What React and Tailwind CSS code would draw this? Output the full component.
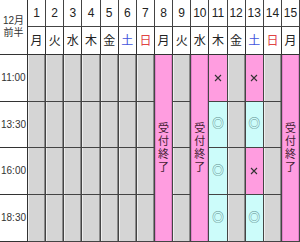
import React from "react";

const days = [
  { n: 1, d: "月", c: "text-[#222]" },
  { n: 2, d: "火", c: "text-[#222]" },
  { n: 3, d: "水", c: "text-[#222]" },
  { n: 4, d: "木", c: "text-[#222]" },
  { n: 5, d: "金", c: "text-[#222]" },
  { n: 6, d: "土", c: "text-[#4455dd]" },
  { n: 7, d: "日", c: "text-[#e04444]" },
  { n: 8, d: "月", c: "text-[#222]" },
  { n: 9, d: "火", c: "text-[#222]" },
  { n: 10, d: "水", c: "text-[#222]" },
  { n: 11, d: "木", c: "text-[#222]" },
  { n: 12, d: "金", c: "text-[#222]" },
  { n: 13, d: "土", c: "text-[#4455dd]" },
  { n: 14, d: "日", c: "text-[#e04444]" },
  { n: 15, d: "月", c: "text-[#222]" },
];

const body = {
  8: "closed",
  10: "closed",
  15: "closed",
  11: ["x", "o", "o", "o"],
  13: ["x", "o", "x", "o"],
};

const rowH = ["h-[48px]", "h-[47px]", "h-[48px]", "h-[48px]"];
const times = ["11:00", "13:30", "16:00", "18:30"];

function Slot({ v, h }) {
  if (v === "gray") {
    return <div className={`${h} bg-[#d5d5d5] border-b border-r border-[#444] shadow-[inset_1px_0_0_#eeeeee,inset_-1px_0_0_#8a8a8a]`} />;
  }
  if (v === "x") {
    return (
      <div className={`${h} bg-[#ff9de0] border-b border-r border-[#444] flex items-center justify-center`}>
        <svg width="8" height="8" viewBox="0 0 8 8" aria-label="×">
          <path d="M1 1L7 7M7 1L1 7" stroke="#333" strokeWidth="1.1" fill="none" />
        </svg>
      </div>
    );
  }
  return (
    <div className={`${h} bg-[#ccfcfa] border-b border-r border-[#444] flex items-center justify-center`}>
      <span className="text-[12px] leading-none text-[#5f8f8f]">◎</span>
    </div>
  );
}

export default function App() {
  return (
    <div
      className="w-[300px] h-[242px] overflow-hidden bg-white flex"
      style={{ fontFamily: '"Liberation Sans", "Noto Sans CJK JP", sans-serif' }}
    >
      <div className="w-[28px] shrink-0 flex flex-col">
        <div className="h-[56px] border-b border-r border-[#333] flex flex-col items-center justify-center text-[10px] leading-[12px] text-[#333]">
          <span>12月</span>
          <span>前半</span>
        </div>
        {times.map((t, i) => (
          <div
            key={t}
            className={`${rowH[i]} border-b border-r border-[#333] flex items-center justify-center text-[10px] text-[#333]`}
          >
            {t}
          </div>
        ))}
      </div>
      {days.map((day) => {
        const b = body[day.n] || "gray";
        return (
          <div key={day.n} className="flex-1 min-w-0 flex flex-col">
            <div className="h-[28px] border-b border-r border-[#444] flex items-center justify-center text-[12px] text-[#222]">
              {day.n}
            </div>
            <div className={`h-[28px] border-b border-r border-[#333] flex items-center justify-center text-[12px] ${day.c}`}>
              {day.d}
            </div>
            {b === "closed" ? (
              <div className="h-[191px] bg-[#ff9de0] border-b border-r border-[#444] shadow-[inset_1px_0_0_#e080c8,inset_-1px_0_0_#e080c8] flex flex-col items-center justify-center text-[11px] leading-[13px] text-[#442233]">
                <span>受</span>
                <span>付</span>
                <span>終</span>
                <span>了</span>
              </div>
            ) : b === "gray" ? (
              rowH.map((h, i) => <Slot key={i} v="gray" h={h} />)
            ) : (
              b.map((v, i) => <Slot key={i} v={v} h={rowH[i]} />)
            )}
          </div>
        );
      })}
    </div>
  );
}
